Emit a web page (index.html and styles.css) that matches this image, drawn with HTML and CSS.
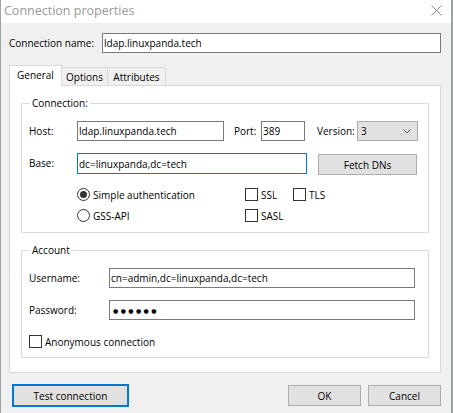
FILE: index.html
```html
<!DOCTYPE html>
<html>
<head>
<meta charset="utf-8">
<link rel="stylesheet" href="styles.css">
</head>
<body>
<div class="dialog">
  <div class="titlebar">
    <span class="title">Connection properties</span>
    <svg class="close" width="11" height="11" viewBox="0 0 11 11"><path d="M0.5 0.5L10.5 10.5M10.5 0.5L0.5 10.5" stroke="#8a8a8a" stroke-width="1" fill="none"/></svg>
  </div>
  <div class="content">
    <div class="name-row">
      <span class="name-label">Connection name:</span>
      <div class="field name-field">ldap.linuxpanda.tech</div>
    </div>
    <div class="tabs">
      <div class="tab tab-active tab-general">General</div>
      <div class="tab tab-options">Options</div>
      <div class="tab tab-attrs">Attributes</div>
    </div>
    <div class="panel">
      <fieldset class="group">
        <legend>Connection:</legend>
        <div class="row row-host">
          <span class="lbl lbl-main">Host:</span>
          <div class="field host-field">ldap.linuxpanda.tech</div>
          <span class="lbl lbl-port">Port:</span>
          <div class="field port-field">389</div>
          <span class="lbl lbl-version">Version:</span>
          <div class="combo"><span>3</span><svg width="8" height="5" viewBox="0 0 8 5"><path d="M0.5 0.5L4 4L7.5 0.5" stroke="#555" fill="none"/></svg></div>
        </div>
        <div class="row row-base">
          <span class="lbl lbl-main">Base:</span>
          <div class="field base-field">dc=linuxpanda,dc=tech</div>
          <div class="btn fetch-btn">Fetch DNs</div>
        </div>
        <div class="row row-opt row-opt1">
          <div class="opt opt-auth"><span class="radio on"></span><span>Simple authentication</span></div>
          <div class="opt opt-ssl"><span class="check"></span><span>SSL</span></div>
          <div class="opt"><span class="check"></span><span>TLS</span></div>
        </div>
        <div class="row row-opt row-opt2">
          <div class="opt opt-auth"><span class="radio"></span><span>GSS-API</span></div>
          <div class="opt opt-ssl"><span class="check"></span><span>SASL</span></div>
        </div>
      </fieldset>
      <fieldset class="group group-account">
        <legend>Account</legend>
        <div class="row row-user">
          <span class="lbl lbl-acc">Username:</span>
          <div class="field acc-field">cn=admin,dc=linuxpanda,dc=tech</div>
        </div>
        <div class="row row-pass">
          <span class="lbl lbl-acc">Password:</span>
          <div class="field acc-field pass">●●●●●●</div>
        </div>
        <div class="row row-anon">
          <div class="opt"><span class="check"></span><span>Anonymous connection</span></div>
        </div>
      </fieldset>
    </div>
    <div class="footer">
      <div class="btn btn-default">Test connection</div>
      <div class="footer-right">
        <div class="btn btn-small">OK</div>
        <div class="btn btn-small">Cancel</div>
      </div>
    </div>
  </div>
</div>
</body>
</html>
```

FILE: styles.css
```css
* { box-sizing: border-box; }
html, body { margin: 0; padding: 0; }
body {
  width: 453px;
  height: 413px;
  overflow: hidden;
  background: #9aa3a6;
  font-family: "Open Sans", "Noto Sans", sans-serif;
  font-size: 10px;
  color: #000;
}
.dialog {
  margin-left: 1px;
  width: 450px;
  height: 413px;
  background: #f0f0f0;
}
.titlebar {
  height: 23px;
  background: #fff;
  display: flex;
  align-items: center;
  justify-content: space-between;
  padding: 0 9px 2px 3px;
}
.title { font-size: 12.5px; color: #999; }
.close { display: block; }
.content { padding: 10px 10px 0 8px; }
.name-row { display: flex; align-items: center; }
.name-label { width: 93px; }
.field {
  height: 20px;
  border: 1px solid #7a7a7a;
  background: #fff;
  padding-left: 1px;
  display: flex;
  align-items: center;
  white-space: nowrap;
  overflow: hidden;
}
.name-field { width: 339px; }
.tabs {
  display: flex;
  align-items: flex-end;
  height: 20px;
  margin-top: 12px;
  position: relative;
  z-index: 1;
}
.tab {
  height: 18px;
  border: 1px solid #d9d9d9;
  border-bottom: none;
  background: #f0f0f0;
  display: flex;
  align-items: center;
  justify-content: center;
}
.tab + .tab { border-left: none; }
.tab-active {
  height: 21px;
  margin-bottom: -1px;
  background: #fff;
  padding-bottom: 2px;
}
.tab-general { width: 53px; }
.tab-options { width: 46px; }
.tab-attrs { width: 58px; }
.panel {
  height: 288px;
  border: 1px solid #d9d9d9;
  background: #fff;
  padding: 10px 11px 0 11px;
}
.group {
  margin: 0;
  min-width: 0;
  border: 1px solid #dcdcdc;
  padding: 11px 7px 10px 7px;
}
.group legend {
  padding: 0 2px;
  margin-left: 1px;
  line-height: 14px;
  height: 14px;
}
.group-account { margin-top: 10px; padding-bottom: 9px; }
.row { display: flex; align-items: center; }
.lbl-main { width: 48px; }
.host-field { width: 147px; }
.lbl-port { margin-left: 10px; width: 27px; }
.port-field { width: 44px; }
.lbl-version { margin-left: 12px; width: 40px; }
.combo {
  width: 61px;
  height: 20px;
  border: 1px solid #adadad;
  background: #e1e1e1;
  display: flex;
  align-items: center;
  justify-content: space-between;
  padding: 0 6px 0 3px;
}
.combo svg { display: block; }
.row-base { margin-top: 12px; align-items: flex-start; }
.row-base .lbl { line-height: 21px; }
.base-field { width: 230px; height: 21px; border-color: #0078d7; }
.btn {
  height: 21px;
  border: 1px solid #adadad;
  background: #e1e1e1;
  display: flex;
  align-items: center;
  justify-content: center;
  white-space: nowrap;
}
.fetch-btn { width: 99px; margin-left: 11px; margin-top: 1px; }
.row-opt { height: 13px; padding-left: 48px; }
.row-opt1 { margin-top: 13px; }
.row-opt2 { margin-top: 8px; }
.opt { display: flex; align-items: center; gap: 3px; white-space: nowrap; }
.opt-auth { width: 168px; }
.opt-ssl { width: 48px; }
.radio {
  width: 13px;
  height: 13px;
  border: 1px solid #333;
  border-radius: 50%;
  background: #fff;
  display: flex;
  align-items: center;
  justify-content: center;
  flex: none;
}
.radio.on::after {
  content: "";
  width: 7px;
  height: 7px;
  border-radius: 50%;
  background: #333;
}
.check {
  width: 13px;
  height: 13px;
  border: 1px solid #333;
  background: #fff;
  flex: none;
}
.lbl-acc { width: 80px; }
.acc-field { width: 306px; }
.row-pass { margin-top: 12px; }
.pass { font-family: "DejaVu Sans", sans-serif; font-size: 6px; letter-spacing: 2.4px; padding-left: 3px; }
.row-anon { margin-top: 15px; height: 13px; }
.footer {
  display: flex;
  justify-content: space-between;
  align-items: center;
  margin-top: 11px;
  height: 23px;
}
.btn-default {
  width: 117px;
  height: 23px;
  border: 2px solid #0078d7;
  margin-left: 3px;
}
.footer-right { display: flex; gap: 7px; }
.btn-small { width: 73px; }
```
